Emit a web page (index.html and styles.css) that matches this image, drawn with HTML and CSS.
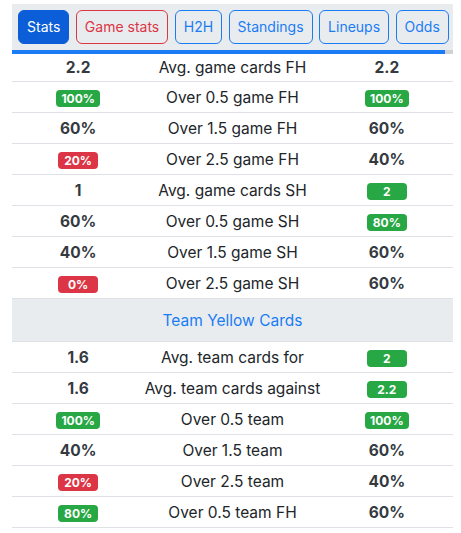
FILE: index.html
```html
<!DOCTYPE html>
<html>
<head>
<meta charset="utf-8">
<link rel="stylesheet" href="styles.css">
</head>
<body>
<div class="wrap">
  <nav class="tabs">
    <button class="tab tab-active">Stats</button>
    <button class="tab tab-red">Game stats</button>
    <button class="tab">H2H</button>
    <button class="tab">Standings</button>
    <button class="tab">Lineups</button>
    <button class="tab">Odds</button>
  </nav>
  <div class="bar"><div class="bar-fill"></div></div>
  <table class="stats">
    <tbody>
      <tr class="first"><td class="val">2.2</td><td class="label">Avg. game cards FH</td><td class="val">2.2</td></tr>
      <tr><td class="val"><span class="badge green">100%</span></td><td class="label">Over 0.5 game FH</td><td class="val"><span class="badge green">100%</span></td></tr>
      <tr><td class="val">60%</td><td class="label">Over 1.5 game FH</td><td class="val">60%</td></tr>
      <tr><td class="val"><span class="badge red">20%</span></td><td class="label">Over 2.5 game FH</td><td class="val">40%</td></tr>
      <tr><td class="val">1</td><td class="label">Avg. game cards SH</td><td class="val"><span class="badge green">2</span></td></tr>
      <tr><td class="val">60%</td><td class="label">Over 0.5 game SH</td><td class="val"><span class="badge green">80%</span></td></tr>
      <tr><td class="val">40%</td><td class="label">Over 1.5 game SH</td><td class="val">60%</td></tr>
      <tr><td class="val"><span class="badge red">0%</span></td><td class="label">Over 2.5 game SH</td><td class="val">60%</td></tr>
      <tr class="section"><td colspan="3">Team Yellow Cards</td></tr>
      <tr><td class="val">1.6</td><td class="label">Avg. team cards for</td><td class="val"><span class="badge green">2</span></td></tr>
      <tr><td class="val">1.6</td><td class="label">Avg. team cards against</td><td class="val"><span class="badge green">2.2</span></td></tr>
      <tr><td class="val"><span class="badge green">100%</span></td><td class="label">Over 0.5 team</td><td class="val"><span class="badge green">100%</span></td></tr>
      <tr><td class="val">40%</td><td class="label">Over 1.5 team</td><td class="val">60%</td></tr>
      <tr><td class="val"><span class="badge red">20%</span></td><td class="label">Over 2.5 team</td><td class="val">40%</td></tr>
      <tr><td class="val"><span class="badge green">80%</span></td><td class="label">Over 0.5 team FH</td><td class="val">60%</td></tr>
    </tbody>
  </table>
</div>
</body>
</html>
```

FILE: styles.css
```css
html, body {
  margin: 0;
  padding: 0;
  background: #fff;
}
body {
  font-family: Inter, "Noto Sans", sans-serif;
  color: #212529;
}
.wrap {
  margin: 4px 8px 0 12px;
}
.tabs {
  display: flex;
  gap: 6.5px;
  background: #e9ecef;
  padding: 6px 6px;
  overflow: hidden;
}
.tab {
  flex: 0 0 auto;
  white-space: nowrap;
  font-family: inherit;
  font-size: 14px;
  height: 34px;
  padding: 0 8px;
  border: 1px solid #1a7cf5;
  border-radius: 6px;
  background: transparent;
  color: #1a7cf5;
  line-height: 1;
}
.tab-active {
  background: #0b5ed7;
  border-color: #0b5ed7;
  color: #fff;
}
.tab-red {
  border-color: #dc3545;
  color: #dc3545;
}
.bar {
  height: 4px;
  background: #cfd1d4;
  display: flex;
}
.bar-fill {
  width: calc(100% - 8px);
  background: #1b7cf5;
}
.stats {
  width: 100%;
  border-collapse: collapse;
  table-layout: fixed;
}
.stats td {
  height: 30px;
  padding: 0;
  text-align: center;
  white-space: nowrap;
  border-bottom: 1px solid #dee2e6;
  font-size: 15.5px;
  vertical-align: middle;
}
.stats tr.first td {
  height: 27px;
}
.stats td.val {
  width: 30%;
  font-weight: 700;
  color: #343a40;
}
.stats td.label {
  width: 40%;
}
.stats tr.section td {
  height: 42px;
  background: #e9ecef;
  color: #1a7cf5;
  font-size: 15.5px;
}
.badge {
  display: inline-block;
  min-width: 40px;
  box-sizing: border-box;
  padding: 0 5px;
  height: 17px;
  line-height: 17px;
  border-radius: 4px;
  font-size: 12px;
  font-weight: 700;
  color: #fff;
  vertical-align: middle;
}
.green { background: #28a745; }
.red { background: #dc3545; }
```
